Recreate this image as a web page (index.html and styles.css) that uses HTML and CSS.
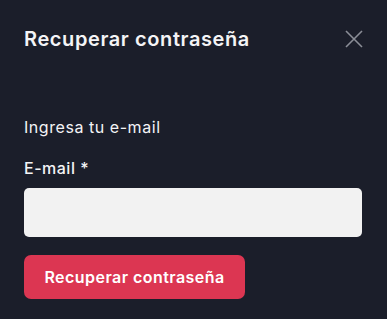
FILE: index.html
```html
<!DOCTYPE html>
<html lang="es">
<head>
<meta charset="utf-8">
<link rel="stylesheet" href="styles.css">
</head>
<body>
<div class="modal">
  <div class="header">
    <h2 class="title">Recuperar contraseña</h2>
    <button class="close" aria-label="Cerrar">
      <svg width="18" height="18" viewBox="0 0 18 18"><path d="M1 1L17 17M17 1L1 17" stroke="#8b8e97" stroke-width="1.6" fill="none"/></svg>
    </button>
  </div>
  <p class="intro">Ingresa tu e-mail</p>
  <label class="label" for="email">E-mail *</label>
  <input class="input" id="email" type="email">
  <button class="submit">Recuperar contraseña</button>
</div>
</body>
</html>
```
FILE: styles.css
```css
html, body {
  margin: 0;
  padding: 0;
  background: #1b1e2a;
  height: 100%;
}
.modal {
  padding: 25px 25px 0 24px;
  font-family: "Inter", "Noto Sans", sans-serif;
  color: #f4f4f6;
  display: flex;
  flex-direction: column;
}
.header {
  display: flex;
  justify-content: space-between;
  align-items: center;
  height: 28px;
}
.title {
  margin: 0;
  font-size: 20px;
  font-weight: 600;
  letter-spacing: 0.6px;
}
.close {
  background: none;
  border: 0;
  padding: 0;
  margin-right: -1px;
  width: 18px;
  height: 18px;
  display: flex;
}
.intro {
  margin: 64px 0 0 0;
  font-size: 16px;
  line-height: 20px;
  letter-spacing: 0.55px;
}
.label {
  margin-top: 21px;
  font-size: 16px;
  line-height: 20px;
  font-weight: 500;
  letter-spacing: 0.5px;
}
.input {
  margin-top: 10px;
  height: 49px;
  box-sizing: border-box;
  border: 0;
  border-radius: 5px;
  background: #f2f2f2;
}
.submit {
  margin-top: 18px;
  align-self: flex-start;
  width: 221px;
  height: 44px;
  border: 0;
  border-radius: 7px;
  background: #dc3652;
  color: #fff;
  font-family: "Inter", "Noto Sans", sans-serif;
  font-size: 16px;
  font-weight: 600;
  letter-spacing: 0.45px;
}
```
